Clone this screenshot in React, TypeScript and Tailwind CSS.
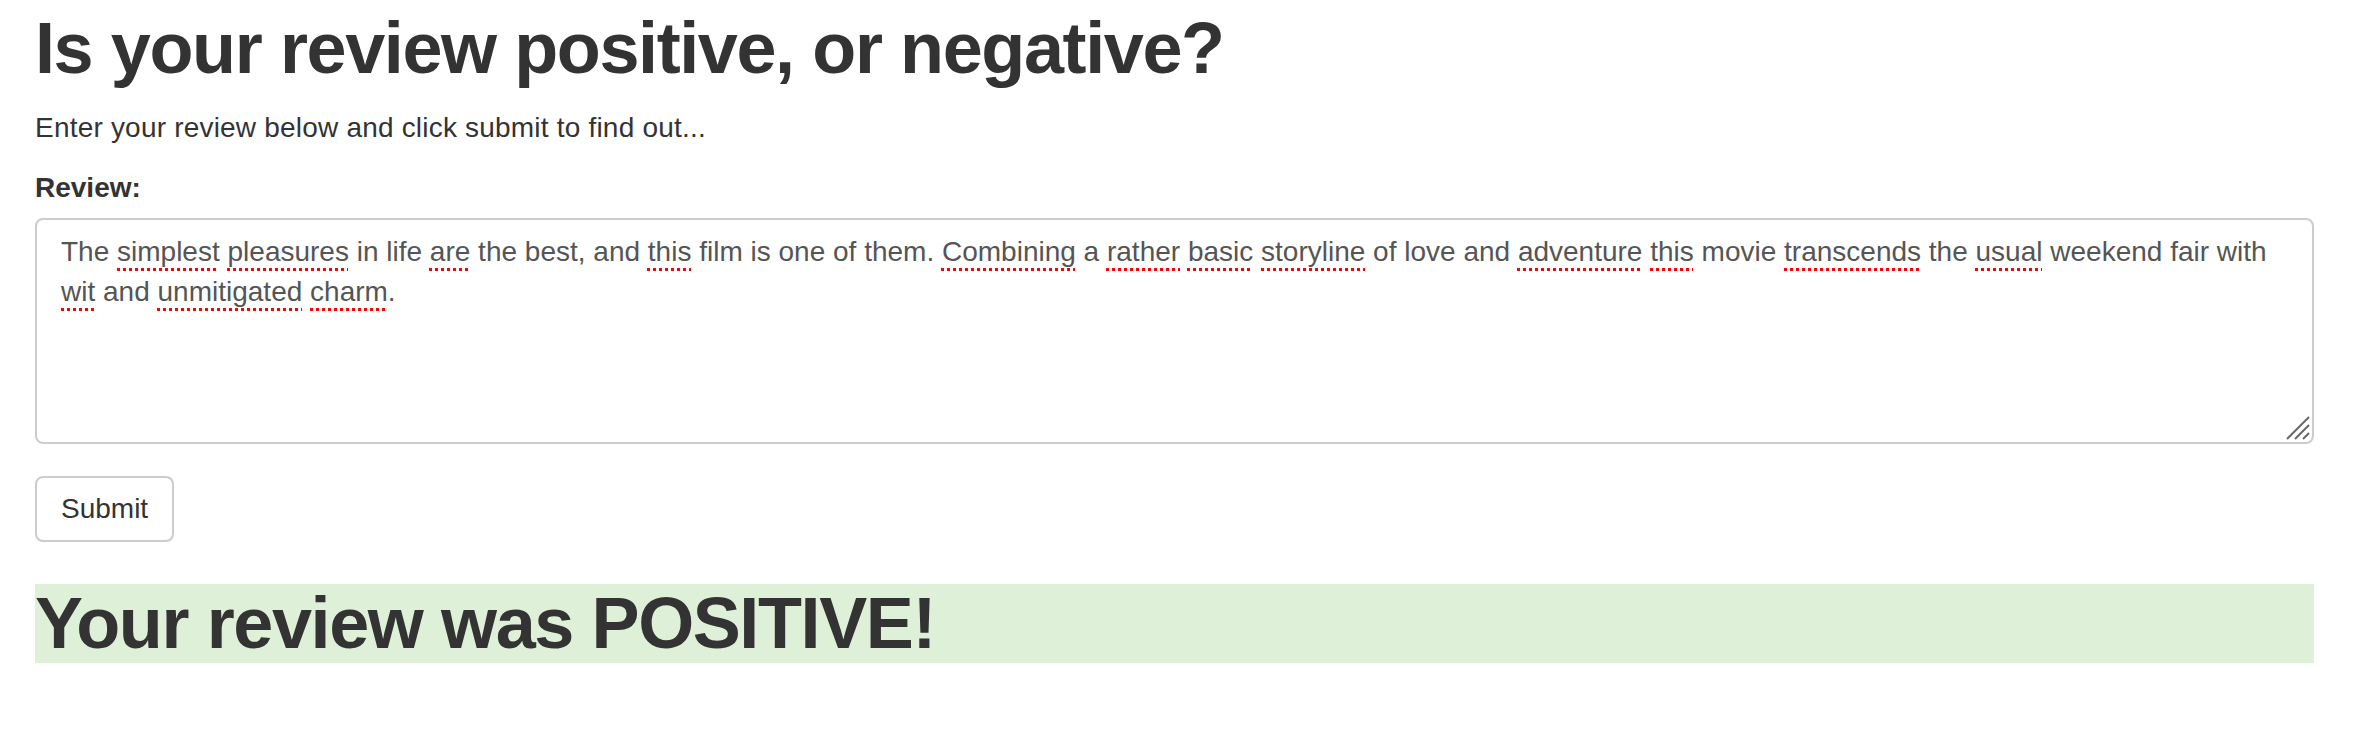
const flagged = new Set([
  'simplest',
  'pleasures',
  'are',
  'this',
  'Combining',
  'rather',
  'basic',
  'storyline',
  'adventure',
  'transcends',
  'usual',
  'wit',
  'unmitigated',
  'charm',
]);

const review =
  'The simplest pleasures in life are the best, and this film is one of them. Combining a rather basic storyline of love and adventure this movie transcends the usual weekend fair with wit and unmitigated charm.';

function ReviewText({ text }: { text: string }) {
  const parts = text.split(/(\s+)/);
  return (
    <>
      {parts.map((part, i) => {
        const word = part.replace(/[.,]/g, '');
        if (flagged.has(word)) {
          const trail = part.slice(word.length);
          return (
            <span key={i}>
              <span className="underline decoration-dotted decoration-[#ff0000] decoration-[3px] underline-offset-[7px]">
                {word}
              </span>
              {trail}
            </span>
          );
        }
        return <span key={i}>{part}</span>;
      })}
    </>
  );
}

function ResizeGrip() {
  return (
    <svg
      className="pointer-events-none absolute bottom-[4px] right-[4px]"
      width="24"
      height="24"
      viewBox="0 0 24 24"
      fill="none"
      stroke="#666"
      strokeWidth="2"
    >
      <path d="M23 1L1 23" />
      <path d="M23 9L9 23" />
      <path d="M23 17L17 23" />
    </svg>
  );
}

export default function App() {
  return (
    <div className="min-h-screen bg-white px-[35px] pr-[50px] text-[#333] font-['Liberation_Sans',Arial,sans-serif]">
      <h1 className="pt-[9px] mb-[20px] text-[72px] leading-[1.1] font-bold tracking-[-1.4px]">
        Is your review positive, or negative?
      </h1>
      <p className="mb-[20px] text-[28px] leading-[40px] tracking-[0.2px]">
        Enter your review below and click submit to find out...
      </p>
      <form className="mb-[32px]" onSubmit={(e) => e.preventDefault()}>
        <label className="block mb-[10px] text-[28px] leading-[40px] font-bold">Review:</label>
        <div className="relative">
          <div
            role="textbox"
            aria-multiline="true"
            className="h-[226px] w-full overflow-auto rounded-[8px] border-2 border-[#ccc] px-[24px] py-[12px] text-[28px] leading-[40px] text-[#555]"
          >
            <ReviewText text={review} />
          </div>
          <ResizeGrip />
        </div>
      </form>
      <button
        type="button"
        className="h-[66px] rounded-[8px] border-2 border-[#ccc] bg-white px-[24px] text-[28px] leading-[40px] text-[#333]"
      >
        Submit
      </button>
      <h1 className="mt-[42px] bg-[#dff0d8] text-[72px] leading-[1.1] font-bold tracking-[-1.4px]">
        Your review was POSITIVE!
      </h1>
    </div>
  );
}
